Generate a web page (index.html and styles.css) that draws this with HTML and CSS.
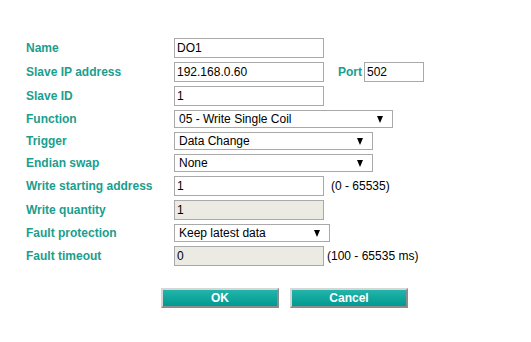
FILE: index.html
```html
<!DOCTYPE html>
<html>
<head>
<meta charset="utf-8">
<link rel="stylesheet" href="styles.css">
</head>
<body>
<form class="form">
  <div class="row">
    <label class="lbl">Name</label>
    <input class="txt w150" value="DO1">
  </div>
  <div class="row">
    <label class="lbl">Slave IP address</label>
    <input class="txt w150" value="192.168.0.60">
    <label class="lbl-inline">Port</label>
    <input class="txt w60" value="502">
  </div>
  <div class="row">
    <label class="lbl">Slave ID</label>
    <input class="txt w150" value="1">
  </div>
  <div class="row">
    <label class="lbl">Function</label>
    <div class="sel w219"><select><option>05 - Write Single Coil</option></select></div>
  </div>
  <div class="row">
    <label class="lbl">Trigger</label>
    <div class="sel w199"><select><option>Data Change</option></select></div>
  </div>
  <div class="row">
    <label class="lbl">Endian swap</label>
    <div class="sel w199"><select><option>None</option></select></div>
  </div>
  <div class="row">
    <label class="lbl">Write starting address</label>
    <input class="txt w150" value="1">
    <span class="hint hint-a">(0 - 65535)</span>
  </div>
  <div class="row">
    <label class="lbl">Write quantity</label>
    <input class="txt w150" value="1" disabled>
  </div>
  <div class="row">
    <label class="lbl">Fault protection</label>
    <div class="sel w156"><select><option>Keep latest data</option></select></div>
  </div>
  <div class="row">
    <label class="lbl">Fault timeout</label>
    <input class="txt w150" value="0" disabled>
    <span class="hint hint-b">(100 - 65535 ms)</span>
  </div>
  <div class="actions">
    <button type="button" class="btn">OK</button>
    <button type="button" class="btn">Cancel</button>
  </div>
</form>
</body>
</html>
```
FILE: styles.css
```css
html, body {
  margin: 0;
  padding: 0;
  background: #ffffff;
}
body {
  font-family: "Liberation Sans", Arial, sans-serif;
  font-size: 12px;
  color: #000;
}
.form {
  padding: 38px 0 0 26px;
  display: flex;
  flex-direction: column;
  gap: 4px;
}
.row {
  display: flex;
  align-items: center;
}
.lbl {
  width: 148px;
  flex: none;
  font-weight: bold;
  color: #1a9e8e;
}
.lbl-inline {
  font-weight: bold;
  color: #1a9e8e;
  margin-left: 14px;
  margin-right: 2px;
}
.txt {
  box-sizing: border-box;
  height: 20px;
  border: 1px solid #a9a9a9;
  border-radius: 0;
  padding: 0 2px;
  margin: 0;
  font-family: "Liberation Sans", Arial, sans-serif;
  font-size: 12px;
  color: #000;
  background: #fff;
  outline: none;
}
.txt:disabled {
  background: #ebebe4;
  color: #000;
}
.w150 { width: 150px; }
.w60 { width: 60px; }
.sel {
  position: relative;
  box-sizing: border-box;
  height: 18px;
}
.sel select {
  appearance: none;
  -webkit-appearance: none;
  box-sizing: border-box;
  width: 100%;
  height: 18px;
  margin: 0;
  border: 1px solid #a9a9a9;
  border-radius: 0;
  background: #fff;
  padding: 0 0 0 4px;
  font-family: "Liberation Sans", Arial, sans-serif;
  font-size: 12px;
  color: #000;
  outline: none;
}
.sel::after {
  content: "";
  position: absolute;
  right: 10px;
  top: 6px;
  width: 0;
  height: 0;
  border-left: 3.5px solid transparent;
  border-right: 3.5px solid transparent;
  border-top: 7px solid #000;
  pointer-events: none;
}
.w219 { width: 219px; }
.w199 { width: 199px; }
.w156 { width: 156px; }
.hint { color: #000; }
.hint-a { margin-left: 7px; }
.hint-b { margin-left: 3px; }
.actions {
  display: flex;
  gap: 11px;
  padding-left: 135px;
  margin-top: 18px;
}
.btn {
  box-sizing: border-box;
  width: 118px;
  height: 20px;
  margin: 0;
  padding: 0;
  border: 2px solid;
  border-color: #d6d6d6 #8c8c8c #8c8c8c #d6d6d6;
  background: linear-gradient(#23b4aa, #009a90);
  color: #fff;
  font-family: "Liberation Sans", Arial, sans-serif;
  font-size: 12px;
  font-weight: bold;
}
```
